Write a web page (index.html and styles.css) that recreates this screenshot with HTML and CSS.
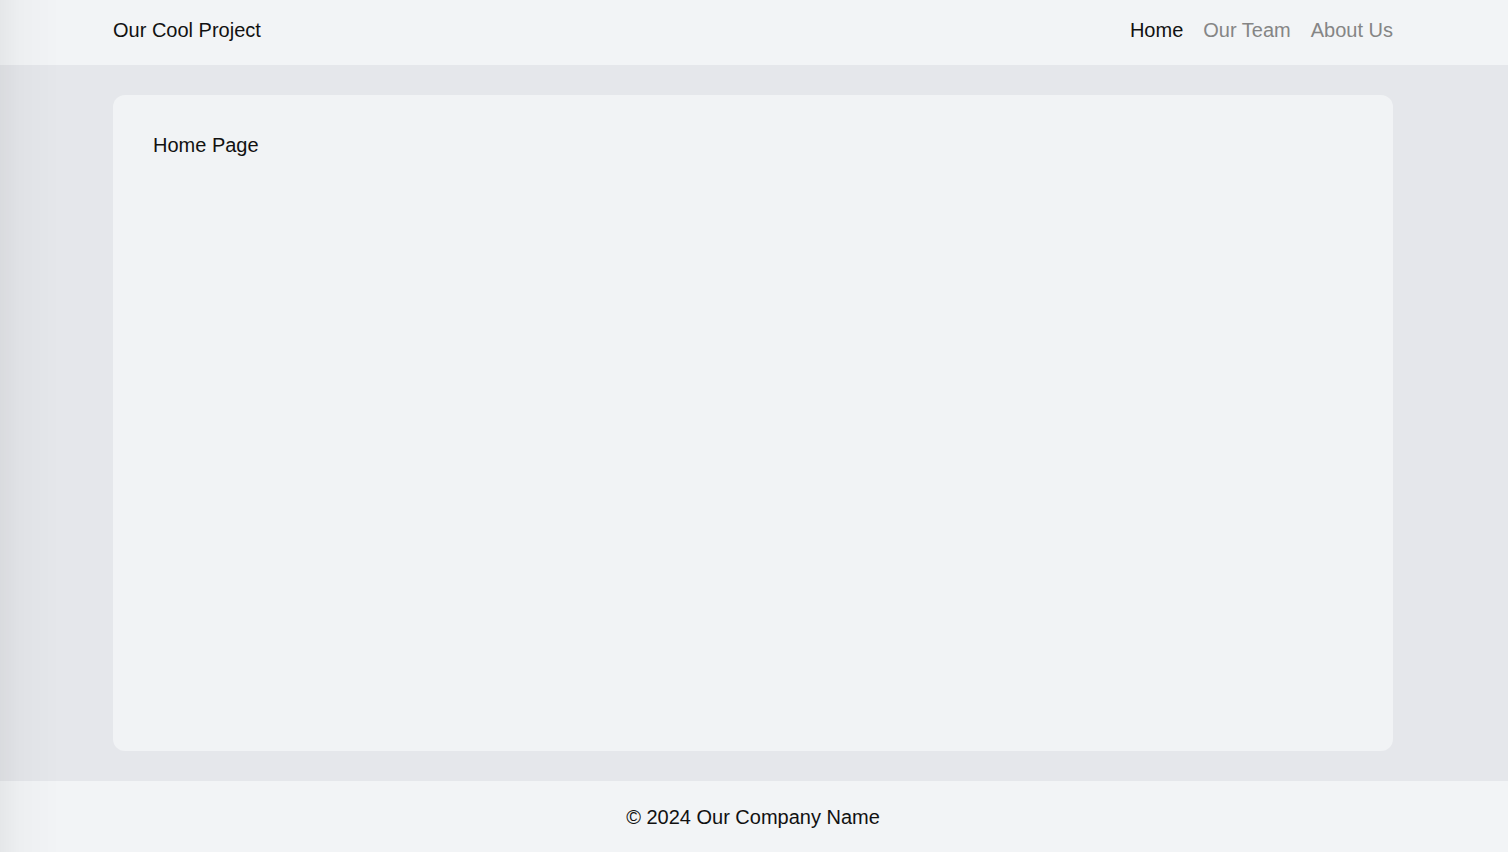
FILE: index.html
```html
<!DOCTYPE html>
<html lang="en">
<head>
<meta charset="utf-8">
<title>Our Cool Project</title>
<link rel="stylesheet" href="styles.css">
</head>
<body>
<div class="page">
  <header class="header">
    <div class="brand">Our Cool Project</div>
    <nav class="nav">
      <a class="nav-link active" href="#">Home</a>
      <a class="nav-link" href="#">Our Team</a>
      <a class="nav-link" href="#">About Us</a>
    </nav>
  </header>
  <main class="main">
    <section class="card">
      <p class="card-title">Home Page</p>
    </section>
  </main>
  <footer class="footer">© 2024 Our Company Name</footer>
</div>
<div class="vignette"></div>
</body>
</html>
```
FILE: styles.css
```css
* { box-sizing: border-box; }
html, body { margin: 0; padding: 0; }
body {
  font-family: "Liberation Sans", Arial, sans-serif;
  font-size: 20px;
  color: #111;
  background: #e5e7eb;
}
.page {
  min-height: 100vh;
  display: flex;
  flex-direction: column;
}
.header {
  height: 65px;
  background: #f2f4f6;
  display: flex;
  align-items: center;
  justify-content: space-between;
  padding: 0 115px 5px 113px;
}
.brand { line-height: 23px; }
.nav { display: flex; gap: 20px; }
.nav-link {
  color: #858585;
  text-decoration: none;
  line-height: 23px;
}
.nav-link.active { color: #111; }
.main {
  flex: 1;
  display: flex;
  padding: 30px 115px 30px 113px;
}
.card {
  flex: 1;
  background: #f1f3f5;
  border-radius: 12px;
  padding: 39px 40px;
}
.card-title { margin: 0; line-height: 23px; }
.footer {
  height: 71px;
  background: #f2f4f6;
  display: flex;
  align-items: center;
  justify-content: center;
  padding: 2px 2px 0 0;
}
.vignette {
  position: fixed;
  inset: 0;
  pointer-events: none;
  background: linear-gradient(to right, rgba(0,0,0,0.05) 0, rgba(0,0,0,0.02) 20px, rgba(0,0,0,0) 60px);
}
```
